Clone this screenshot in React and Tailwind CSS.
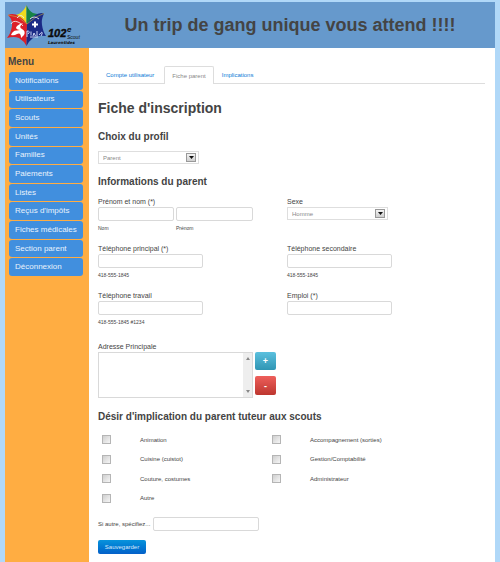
import React from "react";

const menu = [
  "Notifications",
  "Utilisateurs",
  "Scouts",
  "Unités",
  "Familles",
  "Paiements",
  "Listes",
  "Reçus d'impôts",
  "Fiches médicales",
  "Section parent",
  "Déconnexion",
];

const implications = [
  "Animation",
  "Accompagnement (sorties)",
  "Cuisine (cuistot)",
  "Gestion/Comptabilité",
  "Couture, costumes",
  "Administrateur",
  "Autre",
];

const inputClass =
  "block h-[14px] rounded-[2px] border border-[#d9d9d9] bg-white px-1 text-[6px] text-[#555] outline-none";

function Logo() {
  return (
    <svg className="block h-[46px] w-[80px] shrink-0" viewBox="0 0 80 46" role="img" aria-label="102e Scout Laurentides">
      <path d="M21.500 3Q19 9 14 12Q9 14 3 13L21.500 25Z" fill="#f0dc1e" />
      <path d="M21.500 3Q24 9 28 11Q33 13 39 11.500L21.500 25Z" fill="#178246" />
      <path d="M3 13Q8 18 7 24Q6 31 2 36Q9 34 14 36Q19 39 21.500 44L22 22Q12 9 3 13Z" fill="#dc1f28" />
      <path d="M39 11.500Q36 18 37 23Q38 30 41 34Q33 33 28 36Q24 39 21.500 44L22 22Q31 9 39 11.500Z" fill="#1b2a86" />
      <path d="M3 13L13 15L22 22L31 15L39 11.500" fill="none" stroke="#c8b040" strokeWidth="0.600" />
      <path d="M6 33Q8 28 12 28.500L15 28Q9 27 12 24Q14 22 18 21Q13 25 17 27Q21 29 19 33L16 36Q16 30 12 32Q9 34 6 33Z" fill="#fff" />
      <path d="M6 22Q8 18 13 20Q16 21 18 24M25 17Q29 13 34 17M12 16Q16 11 19 16" fill="none" stroke="#f3ecec" strokeWidth="0.900" />
      <path d="M30 19.500v6M27 22.500h6" stroke="#fff" strokeWidth="2" />
      <path d="M22 35V29q4 0 1 3M26 29.500v4M28 34l1-3 1.500 3M32 29v5M34 33q4-5 3-1l-1 2M25 35h8" fill="none" stroke="#dfe4ff" strokeWidth="0.900" />
      <g fill="#0b0b0b" fontFamily="'Liberation Sans', Arial, sans-serif" fontWeight="bold" fontStyle="italic">
        <text x="43" y="35" fontSize="11" stroke="#0b0b0b" strokeWidth="0.400">102</text>
        <text x="62" y="30" fontSize="8">e</text>
        <text x="62" y="37" fontSize="5" fontWeight="normal">Scout</text>
        <text x="43" y="42" fontSize="4" fontFamily="'DejaVu Sans', sans-serif">Laurentides</text>
      </g>
    </svg>
  );
}

function Choice({ id, value, name }) {
  return (
    <div className="relative w-[101px]">
      <select
        id={id}
        aria-label={name}
        className="block h-[13px] w-full appearance-none border border-[#dedede] bg-white pl-1 text-[6px] leading-[10px] text-[#888] outline-none"
      >
        <option>{value}</option>
      </select>
      <span className="pointer-events-none absolute top-[2px] right-[3px] flex h-[9px] w-[10px] items-center justify-center border border-[#999] bg-linear-to-b from-[#f4f4f4] to-[#cfcfcf]">
        <svg className="h-[3px] w-[5px]" viewBox="0 0 5 3">
          <path d="M0 0h5L2.5 3z" fill="#111" />
        </svg>
      </span>
    </div>
  );
}

function Field({ id, label, hint, children }) {
  return (
    <div className="h-[47px]">
      <label htmlFor={id} className="block h-[11px] text-[7px] leading-[11px]">
        {label}
      </label>
      {children || <input id={id} type="text" className={inputClass + " w-[105px]"} />}
      {hint && <p className="mt-[3px] text-[5px] leading-[8px]">{hint}</p>}
    </div>
  );
}

export default function App() {
  return (
    <div className="min-h-screen bg-[#b0d8f8] px-[5px] pt-[2px] font-['Liberation_Sans',Arial,sans-serif] text-[#444]">
      <div className="flex min-h-[560px] flex-col">
        <header className="flex h-[46px] items-center bg-[#6699cc]">
          <Logo />
          <h1 className="flex-1 text-center text-[18px] leading-6 font-bold">
            Un trip de gang unique vous attend !!!!
          </h1>
        </header>
        <div className="flex flex-1">
          <nav className="w-[84px] shrink-0 bg-[#ffad42] pt-[8px]">
            <h2 className="pl-[3px] text-[10px] leading-[12px] font-bold">Menu</h2>
            <ul className="mt-[4px] ml-1 grid h-[204px] w-[74px] auto-rows-fr gap-px">
              {menu.map((item) => (
                <li key={item} className="flex">
                  <a href="#" className="flex flex-1 items-center rounded-[3px] bg-[#418fde] pl-[6px] text-[8px] leading-[10px] whitespace-nowrap text-[#e8f2fc]">
                    {item}
                  </a>
                </li>
              ))}
            </ul>
          </nav>
          <main className="min-w-0 flex-1 bg-white pr-[10px] pb-2 pl-[9px]">
            <div className="mt-[18px] flex h-[18px] items-stretch border-b border-[#ddd] text-[6px] leading-[8px] text-[#0a7ad6]">
              <a href="#" className="flex items-center px-2">Compte utilisateur</a>
              <a href="#" aria-current="page" className="-mb-px ml-[2px] flex items-center rounded-t-[2px] border border-b-0 border-[#ddd] bg-white px-[7px] text-[#888]">
                Fiche parent
              </a>
              <a href="#" className="flex items-center px-2">Implications</a>
            </div>
            <h1 className="mt-[15px] text-[14px] leading-[18px] font-bold">Fiche d'inscription</h1>
            <h2 className="mt-[14px] text-[10px] leading-[12px] font-bold">Choix du profil</h2>
            <div className="mt-[8px]">
              <Choice id="profil" name="Choix du profil" value="Parent" />
            </div>
            <h2 className="mt-[12px] text-[10px] leading-[12px] font-bold">Informations du parent</h2>
            <div className="mt-[8px] grid grid-cols-[189px_1fr]">
              <Field id="nom" label="Prénom et nom (*)">
                <div className="flex gap-[2px]">
                  <div>
                    <input id="nom" type="text" className={inputClass + " w-[76px]"} />
                    <p className="mt-[3px] text-[5px] leading-[8px]">Nom</p>
                  </div>
                  <div>
                    <input id="prenom" aria-label="Prénom" type="text" className={inputClass + " w-[77px]"} />
                    <p className="mt-[3px] text-[5px] leading-[8px]">Prénom</p>
                  </div>
                </div>
              </Field>
              <Field id="sexe" label="Sexe">
                <Choice id="sexe" name="Sexe" value="Homme" />
              </Field>
              <Field id="tel1" label="Téléphone principal (*)" hint="418-555-1845" />
              <Field id="tel2" label="Téléphone secondaire" hint="418-555-1845" />
              <Field id="tel3" label="Téléphone travail" hint="418-555-1845 #1234" />
              <Field id="emploi" label="Emploi (*)" />
            </div>
            <label htmlFor="adresse" className="mt-[4px] block text-[7px] leading-[11px]">Adresse Principale</label>
            <div className="flex gap-[2px]">
              <div className="flex h-[46px] w-[155px] border border-[#d9d9d9]">
                <textarea id="adresse" className="block min-w-0 flex-1 resize-none overflow-hidden px-1 text-[6px] outline-none" />
                <div className="flex w-[9px] flex-col items-center justify-between bg-[#eee] py-1">
                  <svg className="h-[3px] w-[4px]" viewBox="0 0 4 3"><path d="M0 3h4L2 0z" fill="#888" /></svg>
                  <svg className="h-[3px] w-[4px]" viewBox="0 0 4 3"><path d="M0 0h4L2 3z" fill="#888" /></svg>
                </div>
              </div>
              <div className="flex flex-col gap-[6px]">
                <button type="button" className="h-[18px] w-[21px] rounded-[2px] bg-linear-to-b from-[#5bc0de] to-[#2f96b4] text-[9px] leading-[16px] font-bold text-white">+</button>
                <button type="button" className="h-[19px] w-[21px] rounded-[2px] bg-linear-to-b from-[#ee5f5b] to-[#bd362f] text-[9px] leading-[16px] font-bold text-white">-</button>
              </div>
            </div>
            <h2 className="mt-[13px] text-[10px] leading-[12px] font-bold">
              Désir d'implication du parent tuteur aux scouts
            </h2>
            <div className="mt-[7px] grid h-[78px] auto-rows-fr grid-cols-[170px_1fr] pl-[4px]">
              {implications.map((name) => (
                <label key={name} className="flex items-center gap-[29px] text-[6px] leading-[8px]">
                  <input type="checkbox" className="size-[9px] appearance-none border border-[#b5b5b5] bg-linear-to-br from-[#cfcfcf] to-[#f6f6f6]" />
                  {name}
                </label>
              ))}
            </div>
            <div className="mt-[9px] flex items-center">
              <label htmlFor="autre" className="w-[55px] text-[6px] leading-[8px] whitespace-nowrap">Si autre, spécifiez...</label>
              <input id="autre" type="text" className={inputClass + " w-[106px]"} />
            </div>
            <button type="submit" className="mt-[9px] block h-[14px] w-[48px] rounded-[2px] bg-linear-to-b from-[#0993dc] to-[#0560c8] text-[6px] leading-[14px] text-[#d5eafc]">
              Sauvegarder
            </button>
          </main>
        </div>
      </div>
    </div>
  );
}
